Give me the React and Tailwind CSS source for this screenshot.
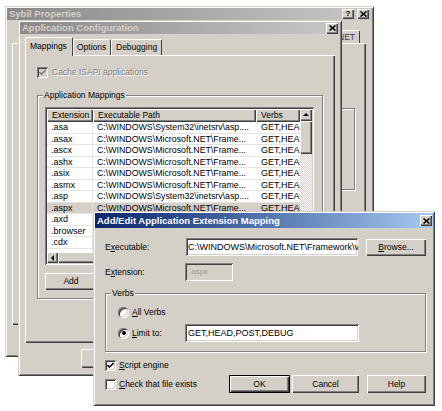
import React from "react";

const WIN =
  "bg-[#d4d0c8] shadow-[inset_1px_1px_0_#d4d0c8,inset_-1px_-1px_0_#404040,inset_2px_2px_0_#ffffff,inset_-2px_-2px_0_#808080]";
const BTN =
  "bg-[#d4d0c8] shadow-[inset_1px_1px_0_#ffffff,inset_-1px_-1px_0_#404040,inset_-2px_-2px_0_#808080]";
const FIELD =
  "shadow-[inset_1px_1px_0_#808080,inset_-1px_-1px_0_#ffffff,inset_2px_2px_0_#404040,inset_-2px_-2px_0_#d4d0c8]";
const ETCH = "border border-[#808080] shadow-[1px_1px_0_#ffffff,inset_1px_1px_0_#ffffff]";
const DITHER =
  "bg-[repeating-conic-gradient(#d4d0c8_0%_25%,#ffffff_0%_50%)] bg-[length:2px_2px]";

const SYS = "C:\\WINDOWS\\System32\\inetsrv\\asp....";
const NET = "C:\\WINDOWS\\Microsoft.NET\\Frame...";

const ROWS = [
  [".asa", SYS],
  [".asax", NET],
  [".ascx", NET],
  [".ashx", NET],
  [".asix", NET],
  [".asmx", NET],
  [".asp", SYS],
  [".aspx", NET, true],
  [".axd", NET],
  [".browser", NET],
  [".cdx", SYS],
  [".cer", SYS],
];

function XGlyph() {
  return (
    <svg width="7" height="6" viewBox="0 0 7 6">
      <path d="M0.5 0.5 L6.5 5.5 M6.5 0.5 L0.5 5.5" stroke="#000" strokeWidth="1.6" fill="none" />
    </svg>
  );
}

function Arrow({ dir }) {
  const d = {
    up: "M0 4 L3 1 L6 4 Z",
    left: "M4 0 L1 3 L4 6 Z",
    right: "M2 0 L5 3 L2 6 Z",
  }[dir];
  return (
    <svg width="6" height="6" viewBox="0 0 6 6">
      <path d={d} fill="#000" />
    </svg>
  );
}

function Check({ checked, disabled }) {
  return (
    <div
      className={`${FIELD} w-[11px] h-[11px] shrink-0 flex items-center justify-center ${
        disabled ? "bg-[#d4d0c8]" : "bg-white"
      }`}
    >
      {checked && (
        <svg width="7" height="7" viewBox="0 0 7 7">
          <path
            d="M0.5 3 L2.5 5.2 L6.5 1"
            stroke={disabled ? "#808080" : "#000"}
            strokeWidth="1.6"
            fill="none"
          />
        </svg>
      )}
    </div>
  );
}

function Radio({ on }) {
  return (
    <div className={`${FIELD} rounded-full bg-white w-[11px] h-[11px] shrink-0 flex items-center justify-center`}>
      {on && <div className="w-[4px] h-[4px] rounded-full bg-black" />}
    </div>
  );
}

function HeaderCell({ className, children }) {
  return (
    <div className={`${BTN} h-full pl-[5px] text-[8.5px] leading-[13px] whitespace-nowrap overflow-hidden ${className}`}>
      {children}
    </div>
  );
}

function ListView() {
  return (
    <div className={`${FIELD} bg-white w-[269px] h-[158px] p-[2px] flex flex-col`}>
      <div className="flex flex-1 min-h-0">
        <div className="flex flex-col w-[253px] overflow-hidden">
          <div className="flex h-[13px] shrink-0">
            <HeaderCell className="w-[46px]">Extension</HeaderCell>
            <HeaderCell className="w-[163px]">Executable Path</HeaderCell>
            <HeaderCell className="w-[44px]">Verbs</HeaderCell>
          </div>
          <div className="flex-1 overflow-hidden">
            {ROWS.map(([ext, path, sel]) => (
              <div
                key={ext}
                className={`flex h-[11.5px] text-[9px] leading-[11px] border-b border-[#e6e4de] ${
                  sel ? "bg-[#d4d0c8]" : "bg-white"
                }`}
              >
                <div className="w-[46px] pl-[4px] border-r border-[#e6e4de] whitespace-nowrap overflow-hidden">{ext}</div>
                <div className="w-[163px] pl-[4px] text-[8.8px] whitespace-nowrap overflow-hidden">{path}</div>
                <div className="w-[44px] pl-[5px] whitespace-nowrap overflow-hidden">GET,HEAD,...</div>
              </div>
            ))}
          </div>
        </div>
        <div className="w-[12px] flex flex-col">
          <div className={`${BTN} h-[12px] flex items-center justify-center`}>
            <Arrow dir="up" />
          </div>
          <div className={`${BTN} h-[33px]`} />
          <div className={`${DITHER} flex-1`} />
        </div>
      </div>
      <div className="h-[11px] flex shrink-0">
        <div className={`${BTN} w-[11px] flex items-center justify-center`}>
          <Arrow dir="left" />
        </div>
        <div className={`${BTN} w-[120px]`} />
        <div className={`${DITHER} flex-1`} />
        <div className={`${BTN} w-[11px] flex items-center justify-center`}>
          <Arrow dir="right" />
        </div>
        <div className="w-[12px] bg-[#d4d0c8]" />
      </div>
    </div>
  );
}

export default function App() {
  return (
    <div className="relative w-[442px] h-[411px] bg-white overflow-hidden font-['Liberation_Sans',Arial,sans-serif] text-black">
      {/* Sybil Properties (back window) */}
      <div className={`${WIN} absolute left-[5px] top-[6px] w-[369px] h-[351px] p-[2px] flex flex-col`}>
        <div className="h-[12px] flex items-center bg-linear-to-r from-[#8a8a8a] to-[#c8c8c8] pl-[2px] pr-[3px]">
          <span className="text-[9.5px] font-bold text-[#d4d0c8] leading-none">Sybil Properties</span>
          <div className={`${BTN} ml-auto w-[12px] h-[10px] flex items-center justify-center text-[8px] font-bold leading-none`}>
            ?
          </div>
          <div className={`${BTN} ml-[3px] w-[12px] h-[10px] flex items-center justify-center`}>
            <XGlyph />
          </div>
        </div>
        <div className="mt-[10px] h-[13px] flex justify-end pr-[12px]">
          <div className="w-[48px] h-[13px] border-t border-l border-white border-r border-r-[#404040] rounded-t-[2px] text-[8.5px] leading-[12px] pr-[4px] text-right text-[#3a3a6a]">
            ASP.NET
          </div>
        </div>
        <div className="ml-[5px] mr-[6px] h-[282px] shadow-[inset_1px_1px_0_#ffffff,inset_-1px_-1px_0_#404040,inset_-2px_-2px_0_#808080] flex justify-end pt-[65px] pr-[11px]">
          <div className={`${ETCH} w-[100px] h-[82px]`} />
        </div>
      </div>

      {/* Application Configuration */}
      <div className={`${WIN} absolute left-[18px] top-[20px] w-[324px] h-[356px] p-[2px] flex flex-col`}>
        <div className="h-[12px] flex items-center bg-linear-to-r from-[#8a8a8a] to-[#c8c8c8] pl-[2px] pr-[2px]">
          <span className="text-[9.5px] font-bold text-[#d4d0c8] leading-none">Application Configuration</span>
          <div className={`${BTN} ml-auto w-[12px] h-[11px] flex items-center justify-center`}>
            <XGlyph />
          </div>
        </div>
        <div className="mt-[3px] h-[18px] flex items-end pl-[5px] relative z-10 text-[8.5px]">
          <div className="w-[48px] h-[19px] -mb-[1px] bg-[#d4d0c8] border-t border-l border-white border-r border-r-[#404040] rounded-t-[2px] pl-[4px] pt-[3px] leading-[11px]">
            Mappings
          </div>
          <div className="w-[38px] h-[16px] border-t border-l border-white border-r border-r-[#404040] rounded-t-[2px] pl-[3px] pt-[2px] leading-[11px]">
            Options
          </div>
          <div className="w-[51px] h-[16px] border-t border-l border-white border-r border-r-[#404040] rounded-t-[2px] pl-[4px] pt-[2px] leading-[11px]">
            Debugging
          </div>
        </div>
        <div className="mx-[5px] h-[288px] shadow-[inset_1px_1px_0_#ffffff,inset_-1px_-1px_0_#404040,inset_-2px_-2px_0_#808080] px-[12px] pt-[12px] flex flex-col">
          <div className="flex items-center gap-[4px] h-[11px]">
            <Check checked disabled />
            <span className="text-[8.5px] text-[#808080] [text-shadow:1px_1px_0_#ffffff]">Cache ISAPI applications</span>
          </div>
          <div className={`${ETCH} relative mt-[17px] h-[204px] pl-[7px] pt-[11px] flex flex-col`}>
            <span className="absolute -top-[6px] left-[5px] px-[1px] bg-[#d4d0c8] text-[8.5px] leading-[11px]">
              Application Mappings
            </span>
            <ListView />
            <div className={`${BTN} mt-[8px] w-[52px] h-[17px] flex items-center justify-center text-[8.5px]`}>Add</div>
          </div>
        </div>
        <div className="mt-[6px] h-[19px] flex justify-end gap-[7px] pr-[5px] text-[8.5px]">
          <div className={`${BTN} w-[80px] h-full flex items-center justify-center`}>OK</div>
          <div className={`${BTN} w-[80px] h-full flex items-center justify-center`}>Cancel</div>
          <div className={`${BTN} w-[80px] h-full flex items-center justify-center`}>Help</div>
        </div>
      </div>

      {/* Add/Edit Application Extension Mapping */}
      <div className={`${WIN} absolute left-[93px] top-[211px] w-[342px] h-[195px] p-[2px] flex flex-col text-[8.5px]`}>
        <div className="h-[15px] flex items-center bg-linear-to-r from-[#0a246a] to-[#a6caf0] pl-[2px] pr-[1px]">
          <span className="text-[9.5px] font-bold text-white leading-none">Add/Edit Application Extension Mapping</span>
          <div className={`${BTN} ml-auto w-[12px] h-[11px] flex items-center justify-center`}>
            <XGlyph />
          </div>
        </div>
        <div className="pl-[10px] pr-[7px] flex flex-col">
          <div className="mt-[10px] h-[18px] flex items-center">
            <span className="w-[81px]">
              E<span className="underline">x</span>ecutable:
            </span>
            <div className={`${FIELD} bg-white w-[172px] h-[18px] pl-[2px] text-[9px] leading-[18px] whitespace-nowrap overflow-hidden`}>
              C:\WINDOWS\Microsoft.NET\Framework\v1.1.4322\aspnet_isapi.dll
            </div>
            <div className={`${BTN} ml-auto w-[60px] h-[17px] flex items-center justify-center`}>
              <span>
                <span className="underline">B</span>rowse...
              </span>
            </div>
          </div>
          <div className="mt-[7px] h-[18px] flex items-center">
            <span className="w-[80px]">
              E<span className="underline">x</span>tension:
            </span>
            <div className={`${FIELD} bg-[#d4d0c8] w-[48px] h-[18px] pl-[4px] text-[8px] leading-[18px] text-[#9a9a9a]`}>
              .aspx
            </div>
          </div>
          <div className={`${ETCH} relative mt-[12px] h-[59px] pl-[12px] pt-[11px] flex flex-col`}>
            <span className="absolute -top-[6px] left-[5px] px-[1px] bg-[#d4d0c8] leading-[11px]">Verbs</span>
            <div className="h-[14px] flex items-center gap-[3px]">
              <Radio />
              <span>
                <span className="underline">A</span>ll Verbs
              </span>
            </div>
            <div className="mt-[5px] h-[18px] flex items-center">
              <div className="w-[67px] flex items-center gap-[3px]">
                <Radio on />
                <span>
                  <span className="underline">L</span>imit to:
                </span>
              </div>
              <div className={`${FIELD} bg-white w-[174px] h-[18px] pl-[3px] text-[9px] leading-[18px]`}>
                GET,HEAD,POST,DEBUG
              </div>
            </div>
          </div>
          <div className="mt-[8px] h-[11px] flex items-center gap-[3px]">
            <Check checked />
            <span>
              <span className="underline">S</span>cript engine
            </span>
          </div>
          <div className="mt-[4px] h-[18px] flex items-center">
            <Check />
            <span className="ml-[3px]">
              <span className="underline">C</span>heck that file exists
            </span>
            <div className="ml-auto flex h-full">
              <div className="w-[61px] h-full border border-black">
                <div className={`${BTN} w-full h-full flex items-center justify-center`}>OK</div>
              </div>
              <div className={`${BTN} ml-[2px] w-[67px] h-full flex items-center justify-center`}>Cancel</div>
              <div className={`${BTN} ml-[8px] w-[59px] h-full flex items-center justify-center`}>Help</div>
            </div>
          </div>
        </div>
      </div>
    </div>
  );
}
